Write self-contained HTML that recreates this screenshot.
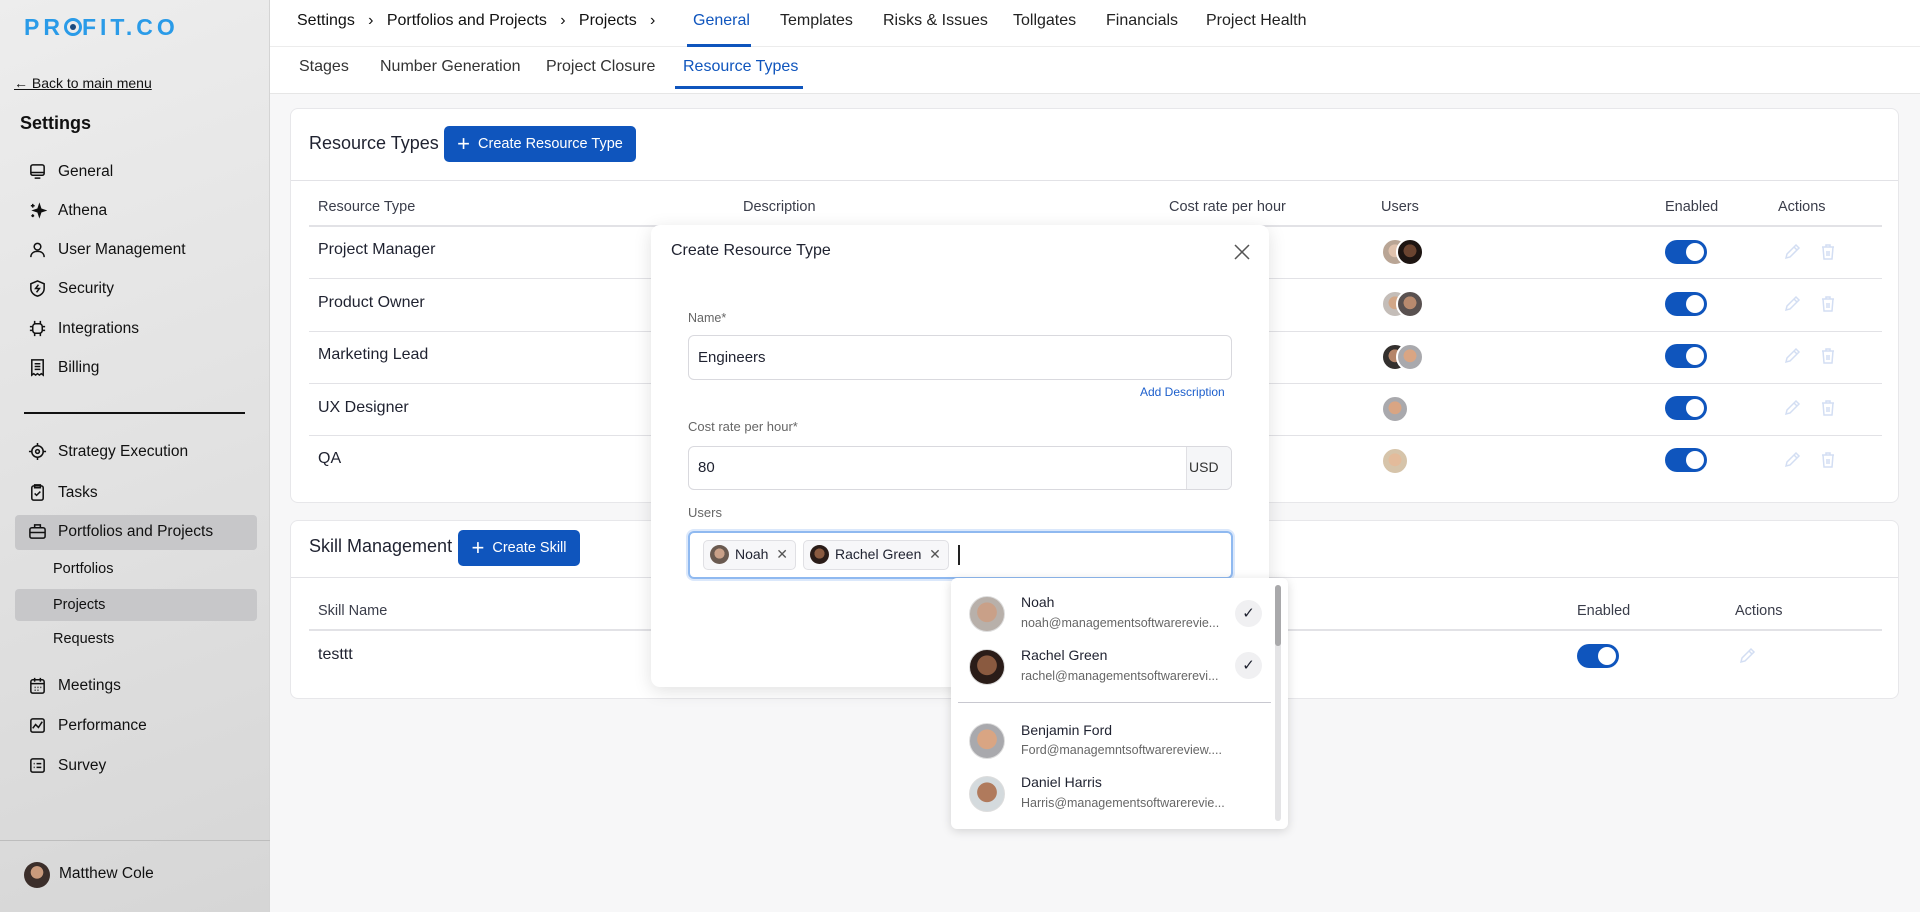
<!DOCTYPE html>
<html><head><meta charset="utf-8"><style>
*{box-sizing:border-box;margin:0;padding:0}
body{width:1920px;height:912px;overflow:hidden;font-family:"Liberation Sans",sans-serif;background:#f7f7f8;position:relative;color:#1f2230}
.a{position:absolute;white-space:nowrap}
#sb{position:absolute;left:0;top:0;width:270px;height:912px;background:linear-gradient(160deg,#ededed 0%,#e2e2e2 50%,#d6d6d6 100%);border-right:1px solid #d4d4d4}
.si{position:absolute;left:28px;font-size:15.5px;color:#111;display:flex;align-items:center;gap:11px}
.si svg{width:19px;height:19px;fill:none;stroke:#111;stroke-width:1.6}
.sub{position:absolute;left:53px;font-size:14.5px;color:#111}
.top{position:absolute;left:270px;top:0;right:0;height:47px;background:#fff;border-bottom:1px solid #ececec}
.tabs2{position:absolute;left:270px;top:47px;right:0;height:47px;background:#fff;border-bottom:1px solid #e6e6e6}
.card{position:absolute;background:#fff;border:1px solid #e7e7ea;border-radius:8px}
.btn{position:absolute;background:#0f55bd;color:#fff;border-radius:5px;font-size:14.5px;display:flex;align-items:center;justify-content:center;gap:8px}
.th{position:absolute;font-size:14.5px;color:#3a3d4a}
.td{position:absolute;font-size:16px;color:#1f2230}
.hl{position:absolute;height:1px;background:#e2e2e6}
.tg{position:absolute;left:1665px;width:42px;height:24px;border-radius:12px;background:#0f55bd}
.tg::after{content:"";position:absolute;right:3px;top:3px;width:18px;height:18px;border-radius:50%;background:#fff}
.av{position:absolute;border-radius:50%;border:2px solid #fff;overflow:hidden}
.ic{position:absolute;width:18px;height:18px;fill:none;stroke:#d3def3;stroke-width:1.5}
</style></head><body>
<div id="sb">
 <div class="a" style="left:24px;top:14px;font-size:23px;font-weight:bold;letter-spacing:4px;color:#2a9be8">PR<span style="display:inline-block;width:18px;height:18px;border:3px solid #2a9be8;border-radius:50%;vertical-align:-1px;position:relative"><span style="position:absolute;left:3px;top:3px;width:6px;height:6px;background:#1a4b80;border-radius:50%"></span></span>FIT.CO</div>
 <div class="a" style="left:14px;top:75px;font-size:14px;text-decoration:underline;color:#111">← Back to main menu</div>
 <div class="a" style="left:20px;top:113px;font-size:18px;font-weight:bold;color:#111">Settings</div>
 <div class="si" style="top:162px"><svg viewBox="0 0 20 20"><rect x="3" y="3" width="14" height="11" rx="2"/><path d="M3 11h14M7 17h6"/></svg>General</div>
 <div class="si" style="top:201px"><svg viewBox="0 0 20 20"><path d="M12 4l1.5 4.5L18 10l-4.5 1.5L12 16l-1.5-4.5L6 10l4.5-1.5z" fill="#111"/><path d="M5 3v4M3 5h4M5 14v3M3.5 15.5h3"/></svg>Athena</div>
 <div class="si" style="top:240px"><svg viewBox="0 0 20 20"><circle cx="10" cy="7" r="3.5"/><path d="M3 18c0-4 3-6 7-6s7 2 7 6"/></svg>User Management</div>
 <div class="si" style="top:279px"><svg viewBox="0 0 20 20"><path d="M10 2l7 3v5c0 4-3 7-7 8-4-1-7-4-7-8V5z"/><path d="M11 6l-3 4h4l-3 4"/></svg>Security</div>
 <div class="si" style="top:319px"><svg viewBox="0 0 20 20"><rect x="5" y="5" width="10" height="10" rx="3"/><path d="M7 2v3M13 2v3M7 15v3M13 15v3M2 8h3M2 12h3M15 8h3M15 12h3"/></svg>Integrations</div>
 <div class="si" style="top:358px"><svg viewBox="0 0 20 20"><path d="M4 2h12v16l-2-1.5-2 1.5-2-1.5-2 1.5-2-1.5-2 1.5z"/><path d="M7 6h6M7 9h6M7 12h6"/></svg>Billing</div>
 <div class="a" style="left:24px;top:412px;width:221px;height:1.5px;background:#111"></div>
 <div class="si" style="top:442px"><svg viewBox="0 0 20 20"><circle cx="10" cy="10" r="6"/><circle cx="10" cy="10" r="2"/><path d="M10 1v3M10 16v3M1 10h3M16 10h3"/></svg>Strategy Execution</div>
 <div class="si" style="top:483px"><svg viewBox="0 0 20 20"><rect x="4" y="3" width="12" height="15" rx="2"/><path d="M7 2h6v3H7zM7 11l2 2 4-4"/></svg>Tasks</div>
 <div class="a" style="left:15px;top:515px;width:242px;height:35px;background:#c7c7c9;border-radius:4px"></div>
 <div class="si" style="top:522px"><svg viewBox="0 0 20 20"><rect x="2" y="6" width="16" height="11" rx="2"/><path d="M7 6V3h6v3M2 11h16"/></svg>Portfolios and Projects</div>
 <div class="sub" style="top:561px">Portfolios</div>
 <div class="a" style="left:15px;top:589px;width:242px;height:32px;background:#c7c7c9;border-radius:4px"></div>
 <div class="sub" style="top:597px">Projects</div>
 <div class="sub" style="top:631px">Requests</div>
 <div class="si" style="top:676px"><svg viewBox="0 0 20 20"><rect x="3" y="4" width="14" height="14" rx="2"/><path d="M3 8h14M7 2v4M13 2v4M7 12h1M10 12h1M13 12h1M7 15h1M10 15h1"/></svg>Meetings</div>
 <div class="si" style="top:716px"><svg viewBox="0 0 20 20"><rect x="3" y="3" width="14" height="14" rx="2"/><path d="M5 13l3-4 3 3 4-6"/></svg>Performance</div>
 <div class="si" style="top:756px"><svg viewBox="0 0 20 20"><rect x="3" y="3" width="14" height="14" rx="2"/><path d="M6 8h1M9 8h5M6 12h1M9 12h5"/></svg>Survey</div>
 <div class="a" style="left:0;top:840px;width:270px;height:1px;background:#bdbdbd"></div>
 <div class="a" style="left:24px;top:862px;width:26px;height:26px;border-radius:50%;background:radial-gradient(circle at 50% 40%,#c99a7c 0 30%,#3b2e2a 32%)"></div>
 <div class="a" style="left:59px;top:865px;font-size:15.5px;color:#111">Matthew Cole</div>
</div>

<div class="top">
 <div class="a" style="left:27px;top:12px;font-size:16px;color:#111">Settings &nbsp;&nbsp;›&nbsp;&nbsp; Portfolios and Projects &nbsp;&nbsp;›&nbsp;&nbsp; Projects &nbsp;&nbsp;›</div>
 <div class="a" style="left:423px;top:12px;font-size:16px;color:#0f55bd">General</div>
 <div class="a" style="left:417px;top:44px;width:64px;height:3px;background:#0f55bd"></div>
 <div class="a" style="left:510px;top:12px;font-size:16px;color:#222">Templates</div>
 <div class="a" style="left:613px;top:12px;font-size:16px;color:#222">Risks &amp; Issues</div>
 <div class="a" style="left:743px;top:12px;font-size:16px;color:#222">Tollgates</div>
 <div class="a" style="left:836px;top:12px;font-size:16px;color:#222">Financials</div>
 <div class="a" style="left:936px;top:12px;font-size:16px;color:#222">Project Health</div>
</div>
<div class="tabs2">
 <div class="a" style="left:29px;top:11px;font-size:16px;color:#333">Stages</div>
 <div class="a" style="left:110px;top:11px;font-size:16px;color:#333">Number Generation</div>
 <div class="a" style="left:276px;top:11px;font-size:16px;color:#333">Project Closure</div>
 <div class="a" style="left:413px;top:11px;font-size:16px;color:#0f55bd">Resource Types</div>
 <div class="a" style="left:405px;top:39px;width:128px;height:3px;background:#0f55bd"></div>
</div>

<div class="card" style="left:290px;top:108px;width:1609px;height:395px"></div>
<div class="a" style="left:309px;top:133px;font-size:18px;color:#1f2230">Resource Types</div>
<div class="btn" style="left:444px;top:126px;width:192px;height:36px"><span style="font-size:22px">+</span>Create Resource Type</div>
<div class="hl" style="left:291px;top:180px;width:1607px"></div>
<div class="th" style="left:318px;top:199px">Resource Type</div>
<div class="th" style="left:743px;top:199px">Description</div>
<div class="th" style="left:1169px;top:199px">Cost rate per hour</div>
<div class="th" style="left:1381px;top:199px">Users</div>
<div class="th" style="left:1665px;top:199px">Enabled</div>
<div class="th" style="left:1778px;top:199px">Actions</div>
<div class="hl" style="left:309px;top:225px;width:1573px;height:2px"></div>
<div class="td" style="left:318px;top:241px">Project Manager</div>
<div class="td" style="left:318px;top:294px">Product Owner</div>
<div class="td" style="left:318px;top:346px">Marketing Lead</div>
<div class="td" style="left:318px;top:399px">UX Designer</div>
<div class="td" style="left:318px;top:450px">QA</div>
<div class="hl" style="left:309px;top:278px;width:1573px"></div>
<div class="hl" style="left:309px;top:331px;width:1573px"></div>
<div class="hl" style="left:309px;top:383px;width:1573px"></div>
<div class="hl" style="left:309px;top:435px;width:1573px"></div>

<div class="av" style="left:1381px;top:238px;width:28px;height:28px;background:radial-gradient(circle at 50% 45%,#e0c2ad 0 35%,#b9a595 37%)"></div>
<div class="av" style="left:1396px;top:238px;width:28px;height:28px;background:radial-gradient(circle at 50% 45%,#6b4430 0 35%,#1e1512 37%)"></div>
<div class="av" style="left:1381px;top:290px;width:28px;height:28px;background:radial-gradient(circle at 50% 45%,#d2a788 0 35%,#c4bdb8 37%)"></div>
<div class="av" style="left:1396px;top:290px;width:28px;height:28px;background:radial-gradient(circle at 50% 45%,#b88a6e 0 35%,#595150 37%)"></div>
<div class="av" style="left:1381px;top:343px;width:28px;height:28px;background:radial-gradient(circle at 50% 45%,#b58569 0 35%,#33302e 37%)"></div>
<div class="av" style="left:1396px;top:343px;width:28px;height:28px;background:radial-gradient(circle at 50% 45%,#d9a583 0 35%,#a9a9ad 37%)"></div>
<div class="av" style="left:1381px;top:395px;width:28px;height:28px;background:radial-gradient(circle at 50% 45%,#d9a583 0 35%,#a9a9ad 37%)"></div>
<div class="av" style="left:1381px;top:447px;width:28px;height:28px;background:radial-gradient(circle at 50% 45%,#e3bb9b 0 35%,#d6c4aa 37%)"></div>

<div class="tg" style="top:240px"></div><div class="tg" style="top:292px"></div><div class="tg" style="top:344px"></div><div class="tg" style="top:396px"></div><div class="tg" style="top:448px"></div>
<svg class="ic" style="left:1783px;top:243px" viewBox="0 0 18 18"><path d="M3 15l1-4 9-9 3 3-9 9zM11 4l3 3"/></svg>
<svg class="ic" style="left:1819px;top:243px" viewBox="0 0 18 18"><path d="M3 4h12M7 4V2h4v2M4 4l1 12h8l1-12M8 8v5M10 8v5"/></svg>
<svg class="ic" style="left:1783px;top:295px" viewBox="0 0 18 18"><path d="M3 15l1-4 9-9 3 3-9 9zM11 4l3 3"/></svg>
<svg class="ic" style="left:1819px;top:295px" viewBox="0 0 18 18"><path d="M3 4h12M7 4V2h4v2M4 4l1 12h8l1-12M8 8v5M10 8v5"/></svg>
<svg class="ic" style="left:1783px;top:347px" viewBox="0 0 18 18"><path d="M3 15l1-4 9-9 3 3-9 9zM11 4l3 3"/></svg>
<svg class="ic" style="left:1819px;top:347px" viewBox="0 0 18 18"><path d="M3 4h12M7 4V2h4v2M4 4l1 12h8l1-12M8 8v5M10 8v5"/></svg>
<svg class="ic" style="left:1783px;top:399px" viewBox="0 0 18 18"><path d="M3 15l1-4 9-9 3 3-9 9zM11 4l3 3"/></svg>
<svg class="ic" style="left:1819px;top:399px" viewBox="0 0 18 18"><path d="M3 4h12M7 4V2h4v2M4 4l1 12h8l1-12M8 8v5M10 8v5"/></svg>
<svg class="ic" style="left:1783px;top:451px" viewBox="0 0 18 18"><path d="M3 15l1-4 9-9 3 3-9 9zM11 4l3 3"/></svg>
<svg class="ic" style="left:1819px;top:451px" viewBox="0 0 18 18"><path d="M3 4h12M7 4V2h4v2M4 4l1 12h8l1-12M8 8v5M10 8v5"/></svg>

<div class="card" style="left:290px;top:520px;width:1609px;height:179px"></div>
<div class="a" style="left:309px;top:536px;font-size:18px">Skill Management</div>
<div class="btn" style="left:458px;top:530px;width:122px;height:36px"><span style="font-size:22px">+</span>Create Skill</div>
<div class="hl" style="left:291px;top:577px;width:1607px"></div>
<div class="th" style="left:318px;top:603px">Skill Name</div>
<div class="th" style="left:1577px;top:603px">Enabled</div>
<div class="th" style="left:1735px;top:603px">Actions</div>
<div class="hl" style="left:309px;top:629px;width:1573px;height:2px"></div>
<div class="td" style="left:318px;top:646px">testtt</div>
<div class="tg" style="left:1577px;top:644px"></div>
<svg class="ic" style="left:1738px;top:647px" viewBox="0 0 18 18"><path d="M3 15l1-4 9-9 3 3-9 9zM11 4l3 3"/></svg>

<div class="a" style="left:651px;top:225px;width:618px;height:462px;background:#fff;border-radius:9px;box-shadow:0 4px 18px rgba(0,0,0,.12)"></div>
<div class="a" style="left:671px;top:242px;font-size:16px;color:#1f2230">Create Resource Type</div>
<svg class="a" style="left:1234px;top:244px" width="16" height="16" viewBox="0 0 16 16"><path d="M1 1l14 14M15 1L1 15" stroke="#555" stroke-width="1.5"/></svg>
<div class="a" style="left:688px;top:311px;font-size:12.5px;color:#666">Name*</div>
<div class="a" style="left:688px;top:335px;width:544px;height:45px;border:1px solid #d9d9de;border-radius:6px"></div>
<div class="a" style="left:698px;top:349px;font-size:15px">Engineers</div>
<div class="a" style="left:1140px;top:385px;font-size:12px;color:#1d5fcc">Add Description</div>
<div class="a" style="left:688px;top:419px;font-size:13px;color:#666">Cost rate per hour*</div>
<div class="a" style="left:688px;top:446px;width:544px;height:44px;border:1px solid #d9d9de;border-radius:6px;overflow:hidden"><div style="position:absolute;right:0;top:0;width:45px;height:44px;background:#f5f6f8;border-left:1px solid #e0e0e4"></div></div>
<div class="a" style="left:698px;top:459px;font-size:15px">80</div>
<div class="a" style="left:1189px;top:459px;font-size:14px;color:#333">USD</div>
<div class="a" style="left:688px;top:505px;font-size:13px;color:#666">Users</div>
<div class="a" style="left:688px;top:531px;width:545px;height:48px;border:2px solid #8fb9f0;border-radius:6px;box-shadow:0 0 0 2px #dbe8fb"></div>
<div class="a" style="left:703px;top:540px;width:93px;height:30px;border:1px solid #e0e0e4;border-radius:5px;background:#f7f7f9"></div>
<div class="a" style="left:710px;top:545px;width:19px;height:19px;border-radius:50%;background:radial-gradient(circle at 50% 45%,#c9a088 0 35%,#6a5a50 37%)"></div>
<div class="a" style="left:735px;top:546px;font-size:14px">Noah&nbsp;&nbsp;<span style="color:#555">✕</span></div>
<div class="a" style="left:803px;top:540px;width:146px;height:30px;border:1px solid #e0e0e4;border-radius:5px;background:#f7f7f9"></div>
<div class="a" style="left:810px;top:545px;width:19px;height:19px;border-radius:50%;background:radial-gradient(circle at 50% 45%,#8a5a40 0 35%,#2a1c18 37%)"></div>
<div class="a" style="left:835px;top:546px;font-size:14px">Rachel Green&nbsp;&nbsp;<span style="color:#555">✕</span></div>
<div class="a" style="left:958px;top:545px;width:1.5px;height:20px;background:#222"></div>

<div class="a" style="left:951px;top:578px;width:337px;height:251px;background:#fff;border-radius:6px;box-shadow:0 2px 10px rgba(0,0,0,.15)"></div>
<div class="a" style="left:1275px;top:585px;width:6px;height:236px;background:#e4e4e6;border-radius:3px"><div style="height:61px;background:#a9a9ab;border-radius:3px"></div></div>
<div class="a" style="left:969px;top:596px;width:36px;height:36px;border-radius:50%;border:1px solid #ddd;background:radial-gradient(circle at 50% 45%,#c9a088 0 38%,#b8b0aa 40%)"></div>
<div class="a" style="left:1021px;top:594px;font-size:14px">Noah</div>
<div class="a" style="left:1021px;top:616px;font-size:12.5px;color:#666">noah@managementsoftwarerevie...</div>
<div class="a" style="left:1235px;top:600px;width:27px;height:27px;border-radius:50%;background:#f0f0f2;text-align:center;line-height:27px;font-size:15px">✓</div>
<div class="a" style="left:969px;top:649px;width:36px;height:36px;border-radius:50%;border:1px solid #ddd;background:radial-gradient(circle at 50% 45%,#8a5a40 0 38%,#2a1c18 40%)"></div>
<div class="a" style="left:1021px;top:647px;font-size:14px">Rachel Green</div>
<div class="a" style="left:1021px;top:669px;font-size:12.5px;color:#666">rachel@managementsoftwarerevi...</div>
<div class="a" style="left:1235px;top:652px;width:27px;height:27px;border-radius:50%;background:#f0f0f2;text-align:center;line-height:27px;font-size:15px">✓</div>
<div class="a" style="left:958px;top:702px;width:313px;height:1px;background:#c8c8d0"></div>
<div class="a" style="left:969px;top:723px;width:36px;height:36px;border-radius:50%;border:1px solid #ddd;background:radial-gradient(circle at 50% 45%,#d9a583 0 38%,#a9a9ad 40%)"></div>
<div class="a" style="left:1021px;top:722px;font-size:14px">Benjamin Ford</div>
<div class="a" style="left:1021px;top:743px;font-size:12.5px;color:#666">Ford@managemntsoftwarereview....</div>
<div class="a" style="left:969px;top:776px;width:36px;height:36px;border-radius:50%;border:1px solid #ddd;background:radial-gradient(circle at 50% 45%,#b07a5c 0 38%,#d4dadd 40%)"></div>
<div class="a" style="left:1021px;top:774px;font-size:14px">Daniel Harris</div>
<div class="a" style="left:1021px;top:796px;font-size:12.5px;color:#666">Harris@managementsoftwarerevie...</div>
</body></html>
